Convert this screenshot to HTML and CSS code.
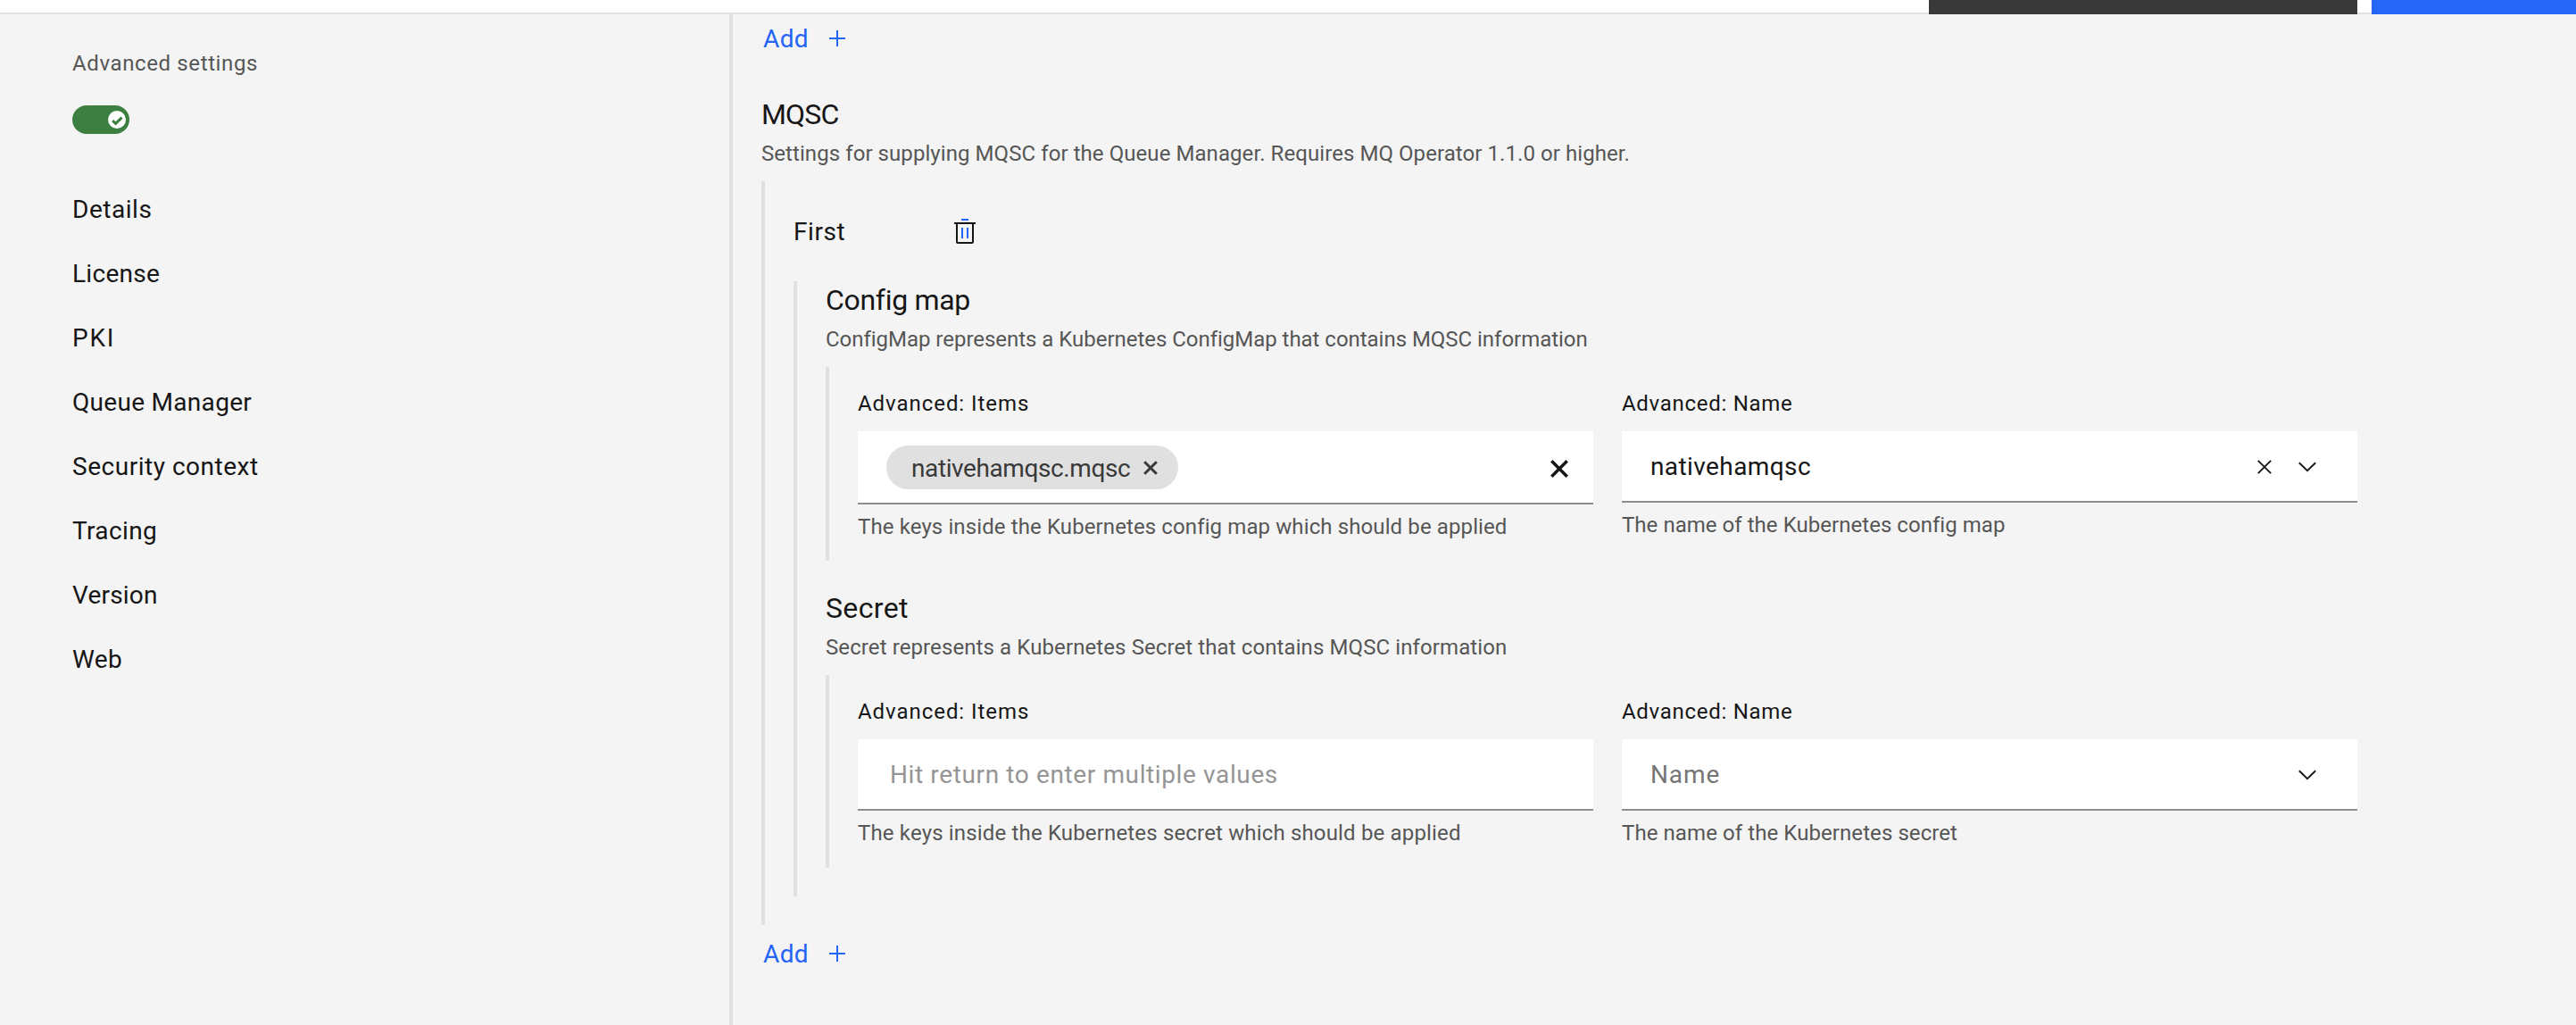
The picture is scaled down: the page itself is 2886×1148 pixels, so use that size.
FILE: index.html
```html
<!DOCTYPE html>
<html lang="en">
<head>
<meta charset="utf-8">
<title>Create QueueManager</title>
<link rel="stylesheet" href="styles.css">
</head>
<body>
<header class="topbar">
  <span class="topbar-action topbar-cancel"></span>
  <span class="topbar-action topbar-create"></span>
</header>
<div class="layout">
  <aside class="sidebar">
    <div class="toggle-label">Advanced settings</div>
    <svg class="toggle" width="64" height="32" viewBox="0 0 64 32">
      <rect width="64" height="32" rx="16" fill="#3d7f40"/>
      <circle cx="50" cy="16" r="10" fill="#fff"/>
      <path d="M45.1 17.2l3.5 3.2 6.900-6.800" fill="none" stroke="#3d7f40" stroke-width="3"/>
    </svg>
    <nav class="nav">
      <a class="nav-details">Details</a>
      <a class="nav-license">License</a>
      <a class="nav-pki">PKI</a>
      <a class="nav-queue">Queue Manager</a>
      <a class="nav-security">Security context</a>
      <a class="nav-tracing">Tracing</a>
      <a class="nav-version">Version</a>
      <a class="nav-web">Web</a>
    </nav>
  </aside>
  <main class="content">
    <div class="add"><span>Add</span><svg width="18" height="18" viewBox="0 0 18 18"><path d="M8 0h2v8h8v2h-8v8H8v-8H0V8h8z" fill="#2464f6"/></svg></div>

    <h2 class="title title-mqsc">MQSC</h2>
    <p class="desc desc-mqsc">Settings for supplying MQSC for the Queue Manager. Requires MQ Operator 1.1.0 or higher.</p>

    <section class="group group-mqsc">
      <div class="entry-head">
        <span>First</span>
        <svg width="24" height="28" viewBox="0 0 24 28" fill="none" stroke-width="2">
          <path d="M0 5h24M3 5v21q0 1 1 1h16q1 0 1-1V5" stroke="#161616"/>
          <path d="M8 1h8M9 10v12M15 10v12" stroke="#2464f6"/>
        </svg>
      </div>
      <div class="group group-entry">
        <h3 class="title title-config">Config map</h3>
        <p class="desc desc-config">ConfigMap represents a Kubernetes ConfigMap that contains MQSC information</p>
        <div class="group fields">
          <div class="field">
            <label class="label-items">Advanced: Items</label>
            <div class="input input-tags">
              <span class="tag"><span>nativehamqsc.mqsc</span><svg width="16" height="16" viewBox="0 0 16 16"><path d="M1.2 1.2l13.6 13.6M14.8 1.2L1.2 14.8" stroke="#393939" stroke-width="3"/></svg></span>
              <svg class="clear-all" width="20" height="20" viewBox="0 0 20 20"><path d="M1.3 1.3l17.4 17.4M18.7 1.3L1.3 18.7" stroke="#161616" stroke-width="3.5"/></svg>
            </div>
            <p class="helper helper-map-items">The keys inside the Kubernetes config map which should be applied</p>
          </div>
          <div class="field">
            <label class="label-name">Advanced: Name</label>
            <div class="input">
              <span class="value">nativehamqsc</span>
              <svg class="clear" width="16" height="16" viewBox="0 0 16 16"><path d="M.8.8l14.4 14.4M15.2.8L.8 15.2" stroke="#161616" stroke-width="1.9"/></svg>
              <svg class="chevron" width="20" height="12" viewBox="0 0 20 12"><path d="M.8 1.2L10 10.2l9.200-9" fill="none" stroke="#161616" stroke-width="1.9"/></svg>
            </div>
            <p class="helper helper-map-name">The name of the Kubernetes config map</p>
          </div>
        </div>

        <h3 class="title title-secret">Secret</h3>
        <p class="desc desc-secret">Secret represents a Kubernetes Secret that contains MQSC information</p>
        <div class="group fields fields-secret">
          <div class="field">
            <label class="label-items">Advanced: Items</label>
            <div class="input">
              <span class="placeholder-items">Hit return to enter multiple values</span>
            </div>
            <p class="helper helper-secret-items">The keys inside the Kubernetes secret which should be applied</p>
          </div>
          <div class="field">
            <label class="label-name">Advanced: Name</label>
            <div class="input">
              <span class="placeholder-name">Name</span>
              <svg class="chevron" width="20" height="12" viewBox="0 0 20 12"><path d="M.8 1.2L10 10.2l9.200-9" fill="none" stroke="#161616" stroke-width="1.9"/></svg>
            </div>
            <p class="helper helper-secret-name">The name of the Kubernetes secret</p>
          </div>
        </div>
      </div>
    </section>

    <div class="add add-last"><span>Add</span><svg width="18" height="18" viewBox="0 0 18 18"><path d="M8 0h2v8h8v2h-8v8H8v-8H0V8h8z" fill="#2464f6"/></svg></div>
  </main>
</div>
</body>
</html>
```
FILE: styles.css
```css
* { box-sizing: border-box; }
body, h2, h3, p { margin: 0; }
h2, h3 { font-weight: 400; }
svg { display: block; flex: none; }

body {
  height: 1148px;
  display: flex;
  flex-direction: column;
  overflow: hidden;
  background: #f4f4f4;
  color: #161616;
  font-family: Roboto, sans-serif;
  font-size: 28px;
  white-space: nowrap;
}

/* Header */
.topbar {
  flex: none;
  height: 16px;
  display: flex;
  justify-content: flex-end;
  gap: 16px;
  background: linear-gradient(#fff 14px, #e0e0e0 14px);
}
.topbar-cancel { width: 480px; background: #393939; }
.topbar-create { width: 229px; background: #2666f7; }

.layout { flex: 1; display: flex; }

/* Sidebar */
.sidebar { width: 817px; flex: none; padding: 39px 0 0 81px; }
.toggle-label {
  font-size: 24px;
  line-height: 32px;
  letter-spacing: .62px;
  color: #565656;
}
.toggle { margin-top: 31px; }
.nav { display: flex; flex-direction: column; margin-top: 49px; line-height: 72px; }
.nav-details { letter-spacing: .54px; }
.nav-license { letter-spacing: .28px; }
.nav-pki { letter-spacing: 1.8px; }
.nav-queue { letter-spacing: .3px; }
.nav-security { letter-spacing: .52px; }
.nav-tracing { letter-spacing: .37px; }
.nav-version { letter-spacing: .2px; }
.nav-web { letter-spacing: .37px; }

/* Form */
.content { flex: 1; border-left: 4px solid #e0e0e0; padding: 9px 245px 0 32px; }
.add {
  display: flex;
  align-items: center;
  height: 36px;
  line-height: 36px;
  padding-left: 2px;
  color: #2464f6;
  letter-spacing: .4px;
}
.add span { width: 74px; padding-top: 2px; }
.add-last { margin-top: 14px; }

.title { font-size: 32px; line-height: 40px; }
.title-mqsc { margin-top: 47px; letter-spacing: -.82px; }
.title-config { letter-spacing: -.3px; }
.title-secret { margin-top: 33px; letter-spacing: .35px; }

.desc {
  margin-top: 8px;
  font-size: 24px;
  line-height: 32px;
  color: #565656;
}
.desc-mqsc { letter-spacing: .07px; }
.desc-config { letter-spacing: -.03px; }
.desc-secret { letter-spacing: .1px; }

.group { border-left: 4px solid #e0e0e0; padding-left: 32px; }
.group-mqsc { margin-top: 15px; padding-top: 38px; padding-bottom: 32px; }
.group-entry { margin-top: 38px; padding-top: 1px; padding-bottom: 32px; }

.entry-head {
  display: flex;
  align-items: center;
  height: 36px;
  line-height: 36px;
  letter-spacing: .57px;
}
.entry-head span { width: 180px; padding-top: 2px; }

.fields {
  display: grid;
  grid-template-columns: 824px 824px;
  column-gap: 32px;
  margin-top: 15px;
  padding-top: 25px;
  padding-bottom: 22px;
}
.fields-secret { padding-bottom: 23px; }
.field label { display: block; font-size: 24px; line-height: 32px; }
.label-items { letter-spacing: .95px; }
.label-name { letter-spacing: .71px; }

.input {
  display: flex;
  align-items: center;
  height: 80px;
  margin-top: 15px;
  padding: 2px 46px 0 32px;
  background: #fff;
  border-bottom: 2px solid #8d8d8d;
  line-height: 76px;
}
.input-tags { height: 82px; padding: 1px 28px 0 32px; justify-content: space-between; }
.tag {
  display: flex;
  align-items: center;
  width: 327px;
  height: 49px;
  padding-left: 28px;
  gap: 15px;
  border-radius: 25px;
  background: #e0e0e0;
  color: #393939;
  line-height: 47px;
  letter-spacing: -.4px;
}
.tag span { padding-top: 2px; }
.clear-all { margin-top: 3px; }
.value { flex: 1; letter-spacing: .41px; }
.clear { margin-right: 30px; }
.placeholder-items { padding-left: 4px; color: #959595; letter-spacing: .62px; }
.placeholder-name { flex: 1; color: #757575; letter-spacing: .9px; }

.helper { margin-top: 9px; font-size: 24px; line-height: 32px; color: #565656; }
.helper-map-items { letter-spacing: .11px; }
.helper-map-name { letter-spacing: .04px; }
.helper-secret-items { letter-spacing: .16px; }
.helper-secret-name { letter-spacing: .08px; }
```
